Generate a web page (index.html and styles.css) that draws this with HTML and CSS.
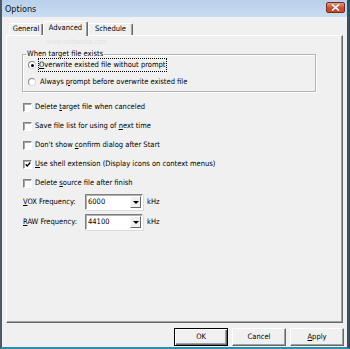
FILE: index.html
```html
<!DOCTYPE html>
<html>
<head>
<meta charset="utf-8">
<link rel="stylesheet" href="styles.css">
</head>
<body>
<div class="window">
  <div class="titlebar">
    <span class="title">Options</span>
    <span class="close"><svg width="9" height="7" viewBox="0 0 9 7"><path d="M1 0.5 L8 6.5 M8 0.5 L1 6.5" stroke="#fff" stroke-width="1.6"/></svg></span>
  </div>
  <div class="mark-small">www.softpedia.com</div>
  <div class="tabs">
    <div class="tab tab-general">General</div>
    <div class="tab tab-adv active">Advanced</div>
    <div class="tab tab-sched">Schedule</div>
  </div>
  <div class="panel">
    <fieldset class="group">
      <legend>When target file exists</legend>
      <div class="opt"><span class="radio checked"></span><span class="focus"><u>O</u>verwrite existed file without prompt</span></div>
      <div class="opt"><span class="radio"></span><span class="lbl">Always <u>p</u>rompt before overwrite existed file</span></div>
    </fieldset>
    <div class="checks">
      <div class="chk"><span class="box"></span><span>Delete <u>t</u>arget file when canceled</span></div>
      <div class="chk"><span class="box"></span><span>Save file list for using of <u>n</u>ext time</span></div>
      <div class="chk"><span class="box"></span><span>Don't show <u>c</u>onfirm dialog after Start</span></div>
      <div class="chk"><span class="box"><svg width="7" height="7" viewBox="0 0 7 7"><path d="M0.8 3.2 L2.6 5.2 L6.2 1.2" fill="none" stroke="#000" stroke-width="1.5"/></svg></span><span><u>U</u>se shell extension (Display icons on context menus)</span></div>
      <div class="chk"><span class="box"></span><span>Delete <u>s</u>ource file after finish</span></div>
    </div>
    <div class="freqs">
      <div class="freq"><span class="flabel"><u>V</u>OX Frequency:</span><span class="combo"><span class="cval">6000</span><span class="cbtn"><span class="arrow"></span></span></span><span class="unit">kHz</span></div>
      <div class="freq"><span class="flabel"><u>R</u>AW Frequency:</span><span class="combo"><span class="cval">44100</span><span class="cbtn"><span class="arrow"></span></span></span><span class="unit">kHz</span></div>
    </div>
  </div>
  <div class="buttons">
    <div class="btn default"><span class="btn-in">OK</span></div>
    <div class="btn"><span class="btn-in">Cancel</span></div>
    <div class="btn"><span class="btn-in"><u>A</u>pply</span></div>
  </div>
</div>
</body>
</html>
```
FILE: styles.css
```css
html, body { margin: 0; padding: 0; background: #f0f0f0; }
.window {
  width: 350px; height: 349px; box-sizing: border-box;
  border-left: 2px solid #4d5966; border-right: 3px solid #2f4f6b; border-bottom: 2px solid #2b8db0;
  background: #f0f0f0; display: flex; flex-direction: column; position: relative;
  font-family: "DejaVu Sans Condensed", "DejaVu Sans", "Liberation Sans", sans-serif;
  font-stretch: condensed; font-size: 7.5px; line-height: 10px; color: #000;
}
u { text-decoration: underline; text-underline-offset: 1px; }
.titlebar {
  height: 17px; flex: none; display: flex; align-items: center; justify-content: space-between;
  padding: 0 2px 0 3px;
  background: linear-gradient(#b8d0ea, #c9ddf2);
}
.title { font-size: 9px; color: #101010; }
.close {
  width: 19px; height: 11px; box-sizing: border-box; margin-top: -2px;
  border: 1px solid #7a2a1c; border-radius: 2px;
  background: linear-gradient(#e29a86, #c8502f 55%, #c44a2c);
  display: flex; align-items: center; justify-content: center;
}
.close svg { display: block; }
.mark-small { position: absolute; left: 44px; top: 38px; font-size: 7px; color: #e2e2e2; line-height: 9px; }
.tabs {
  flex: none; height: 14px; margin-top: 4px; padding-left: 7px;
  display: flex; align-items: flex-end; position: relative; z-index: 2;
}
.tab {
  box-sizing: border-box; height: 12px; text-align: center; line-height: 10px;
  border-top: 1px solid #fff; border-left: 1px solid #fff; border-right: 1px solid #696969;
  box-shadow: inset -1px 0 0 #a0a0a0; border-radius: 2px 2px 0 0;
  background: #f0f0f0;
}
.tab-general { width: 34px; }
.tab-adv { width: 45px; }
.tab-sched { width: 45px; }
.tab.active { height: 15px; margin-bottom: -1px; line-height: 11px; }
.panel {
  flex: none; height: 288px; box-sizing: border-box; margin: 0 4px;
  border-top: 1px solid #fff; border-left: 1px solid #fff;
  border-right: 1px solid #696969; border-bottom: 1px solid #696969;
  box-shadow: inset -1px -1px 0 #a0a0a0;
  display: flex; flex-direction: column; position: relative; z-index: 1;
}
.group {
  margin: 14px 0 0 15px; width: 294px; box-sizing: border-box;
  padding: 0 0 2px 3px; min-width: 0;
  border: 1px solid #b4b4b4; box-shadow: inset 1px 1px 0 #fff, 1px 1px 0 #fff;
}
.group legend { padding: 0 1px; line-height: 8px; }
.opt { height: 14px; display: flex; align-items: center; margin-left: 2px; }
.opt + .opt { margin-top: 3px; }
.radio {
  width: 8px; height: 8px; box-sizing: border-box; border-radius: 50%;
  border: 1px solid #8a8a8a; border-right-color: #d8d8d8; border-bottom-color: #d8d8d8;
  background: #fff; margin-right: 4px; flex: none;
  display: flex; align-items: center; justify-content: center;
}
.radio.checked::after { content: ""; width: 3px; height: 3px; border-radius: 50%; background: #000; }
.focus { outline: 1px dotted #000; outline-offset: 0; padding: 1px 1px 1px 0; margin-left: -1px; }
.checks { display: flex; flex-direction: column; gap: 7px; margin: 9px 0 0 16px; }
.chk { height: 12px; display: flex; align-items: center; }
.box {
  width: 9px; height: 9px; box-sizing: border-box; flex: none; margin-right: 3px;
  border-top: 1px solid #808080; border-left: 1px solid #808080;
  border-right: 1px solid #fff; border-bottom: 1px solid #fff;
  box-shadow: inset 1px 1px 0 #a9a9a9; background: #fff;
  display: flex; align-items: center; justify-content: center;
}
.box svg { display: block; margin: 0 0 0 1px; }
.freqs { display: flex; flex-direction: column; gap: 4px; margin: 5px 0 0 16px; }
.freq { height: 16px; display: flex; align-items: center; }
.flabel { width: 62px; flex: none; }
.combo {
  width: 58px; height: 16px; box-sizing: border-box; flex: none;
  border-top: 1px solid #808080; border-left: 1px solid #808080;
  border-right: 1px solid #fff; border-bottom: 1px solid #fff;
  box-shadow: inset 1px 1px 0 #b0b0b0, 1px 1px 0 #dcdcdc;
  background: #fff; display: flex; align-items: center; padding: 1px 1px 1px 2px;
}
.cval { flex: 1; }
.cbtn {
  width: 11px; height: 12px; box-sizing: border-box; flex: none; background: #f0f0f0;
  border-top: 1px solid #fff; border-left: 1px solid #fff;
  border-right: 1px solid #696969; border-bottom: 1px solid #696969;
  display: flex; align-items: center; justify-content: center;
}
.arrow { width: 0; height: 0; border-left: 3px solid transparent; border-right: 3px solid transparent; border-top: 3px solid #000; margin-top: 1px; }
.unit { margin-left: 4px; }
.buttons { flex: none; display: flex; justify-content: flex-end; gap: 4px; margin-top: 5px; padding-right: 3px; height: 18px; }
.btn {
  width: 54px; height: 18px; box-sizing: border-box;
  border-top: 1px solid #fff; border-left: 1px solid #fff;
  border-right: 1px solid #696969; border-bottom: 1px solid #696969;
  box-shadow: inset -1px -1px 0 #a0a0a0;
  display: flex; align-items: center; justify-content: center;
}
.btn.default { border: 1px solid #000; box-shadow: inset 1px 1px 0 #fff, inset -1px -1px 0 #696969, inset -2px -2px 0 #a0a0a0; }
.btn-in { line-height: 10px; }
```
